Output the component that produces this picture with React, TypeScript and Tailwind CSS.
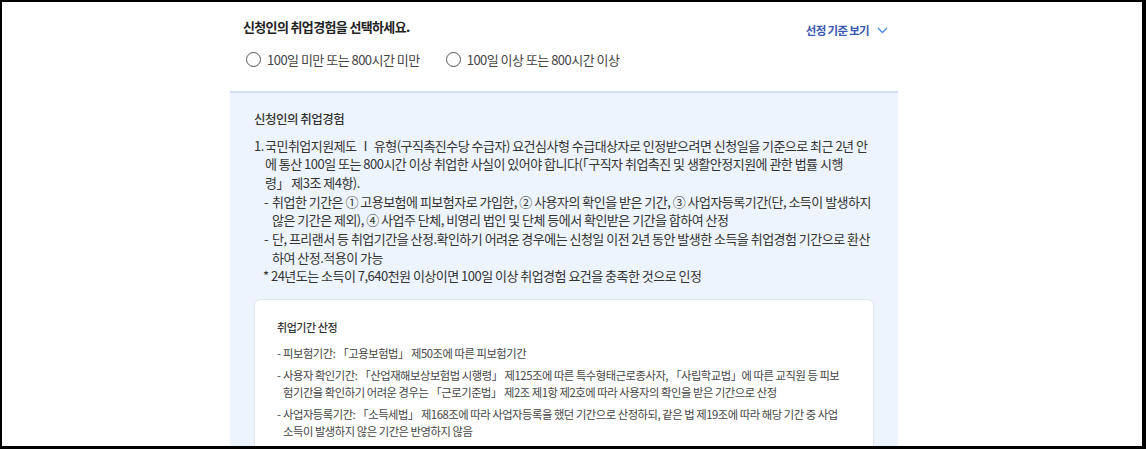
import React from 'react';

const font = { fontFamily: '"Noto Sans CJK KR", "Noto Sans", sans-serif' };

function Radio({ label }: { label: string }) {
  return (
    <label className="flex items-center gap-[6px] text-[13px] text-[#444] tracking-[-0.04em]">
      <span className="block w-[15px] h-[15px] rounded-full border border-[#555] bg-white" />
      <span>{label}</span>
    </label>
  );
}

export default function App() {
  return (
    <div
      style={font}
      className="w-[1146px] h-[449px] overflow-hidden bg-white border-t-2 border-l-2 border-r-4 border-b-[3px] border-black"
    >
      <div className="w-[668px] ml-[228px]">
        {/* 선택 영역 */}
        <div className="pl-[13px] pr-[10px] pt-[12px]">
          <div className="flex items-center justify-between">
            <h2 className="text-[13px] font-bold text-[#222] tracking-[-0.05em] leading-[18px]">
              신청인의 취업경험을 선택하세요.
            </h2>
            <button className="flex items-center gap-[8px] text-[11.5px] font-bold text-[#3b58b0] tracking-[-0.06em] leading-[18px] mt-[7px]">
              선정 기준 보기
              <svg width="11" height="7" viewBox="0 0 11 7" fill="none">
                <path d="M1 1l4.5 4.5L10 1" stroke="#4a8ae6" strokeWidth="1.4" />
              </svg>
            </button>
          </div>
          <div className="flex items-center gap-[26px] mt-[11px] pl-[3px]">
            <Radio label="100일 미만 또는 800시간 미만" />
            <Radio label="100일 이상 또는 800시간 이상" />
          </div>
        </div>

        {/* 안내 패널 */}
        <div className="mt-[21px] bg-[#eef4fd] border-t-2 border-[#d4ddf4] pl-[24px] pr-[24px] pt-[17px]">
          <h3 className="text-[12.5px] font-medium text-[#333] tracking-[-0.04em] leading-[18px]">
            신청인의 취업경험
          </h3>
          <div className="mt-[9px] text-[13px] text-[#333] tracking-[-0.04em] leading-[18.7px]">
            <div className="flex">
              <span className="w-[11px] shrink-0">1.</span>
              <div>
                <div className="whitespace-nowrap">국민취업지원제도 Ⅰ 유형(구직촉진수당 수급자) 요건심사형 수급대상자로 인정받으려면 신청일을 기준으로 최근 2년 안</div>
                <div className="whitespace-nowrap">에 통산 100일 또는 800시간 이상 취업한 사실이 있어야 합니다(「구직자 취업촉진 및 생활안정지원에 관한 법률 시행</div>
                <div>령」 제3조 제4항).</div>
              </div>
            </div>
            <div className="pl-[10px]">
              <div className="flex">
                <span className="w-[8px] shrink-0">-</span>
                <div>
                  <div className="whitespace-nowrap">취업한 기간은 ① 고용보험에 피보험자로 가입한, ② 사용자의 확인을 받은 기간, ③ 사업자등록기간(단, 소득이 발생하지</div>
                  <div>않은 기간은 제외), ④ 사업주 단체, 비영리 법인 및 단체 등에서 확인받은 기간을 합하여 산정</div>
                </div>
              </div>
              <div className="flex">
                <span className="w-[8px] shrink-0">-</span>
                <div>
                  <div className="whitespace-nowrap">단, 프리랜서 등 취업기간을 산정.확인하기 어려운 경우에는 신청일 이전 2년 동안 발생한 소득을 취업경험 기간으로 환산</div>
                  <div>하여 산정.적용이 가능</div>
                </div>
              </div>
              <div className="-ml-[1px]">* 24년도는 소득이 7,640천원 이상이면 100일 이상 취업경험 요건을 충족한 것으로 인정</div>
            </div>
          </div>

          {/* 취업기간 산정 카드 */}
          <div className="mt-[13px] bg-white border border-[#e3e6eb] rounded-[6px] pl-[22px] pr-[20px] pt-[19px] pb-[20px]">
            <h4 className="text-[11px] font-medium text-[#333] tracking-[-0.04em] leading-[16px]">
              취업기간 산정
            </h4>
            <div className="mt-[10px] flex flex-col gap-[5px] text-[11.3px] text-[#444] tracking-[-0.04em] leading-[17px]">
              <div className="flex">
                <span className="w-[6px] shrink-0">-</span>
                <div>피보험기간: 「고용보험법」 제50조에 따른 피보험기간</div>
              </div>
              <div className="flex">
                <span className="w-[6px] shrink-0">-</span>
                <div>
                  <div className="whitespace-nowrap">사용자 확인기간: 「산업재해보상보험법 시행령」 제125조에 따른 특수형태근로종사자, 「사립학교법」에 따른 교직원 등 피보</div>
                  <div>험기간을 확인하기 어려운 경우는 「근로기준법」 제2조 제1항 제2호에 따라 사용자의 확인을 받은 기간으로 산정</div>
                </div>
              </div>
              <div className="flex">
                <span className="w-[6px] shrink-0">-</span>
                <div>
                  <div className="whitespace-nowrap">사업자등록기간: 「소득세법」 제168조에 따라 사업자등록을 했던 기간으로 산정하되, 같은 법 제19조에 따라 해당 기간 중 사업</div>
                  <div>소득이 발생하지 않은 기간은 반영하지 않음</div>
                </div>
              </div>
            </div>
          </div>
        </div>
      </div>
    </div>
  );
}
